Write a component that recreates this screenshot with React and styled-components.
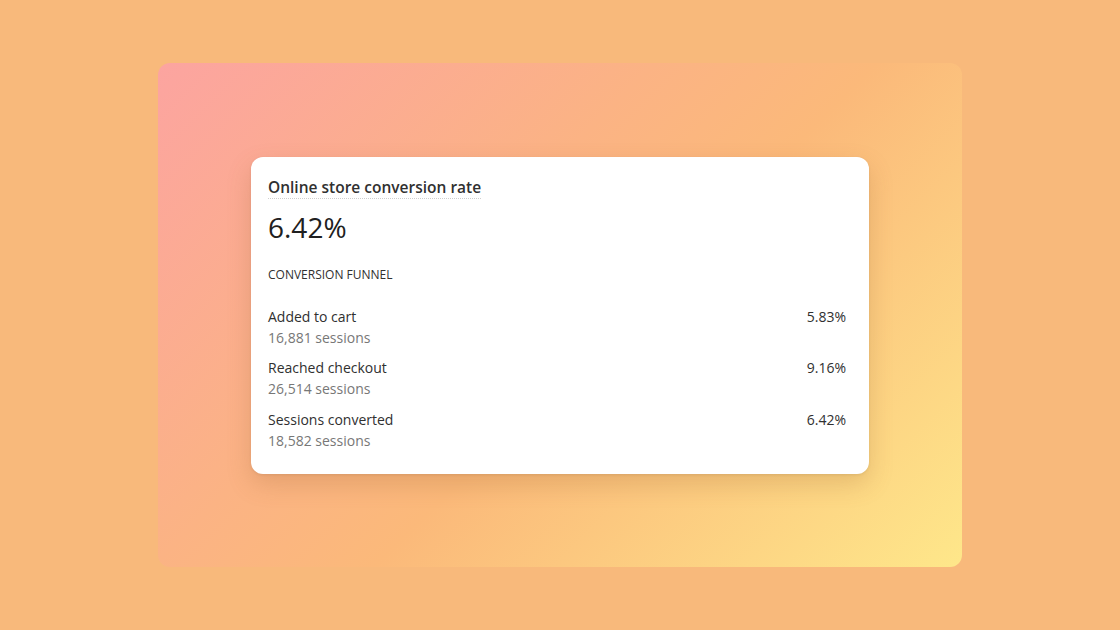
import React from 'react'
import styled, { createGlobalStyle } from 'styled-components'

const GlobalStyle = createGlobalStyle`
  html, body {
    margin: 0;
    padding: 0;
    background: #f8b97b;
  }
  body {
    font-family: "Open Sans", "Noto Sans", sans-serif;
  }
`

const Page = styled.div`
  height: 630px;
  display: flex;
  align-items: center;
  justify-content: center;
`

const Backdrop = styled.div`
  width: 804px;
  height: 504px;
  border-radius: 12px;
  background: linear-gradient(135deg, #fca4a0 0%, #fbb384 38%, #fbb97a 55%, #fee78a 100%);
  display: flex;
  align-items: center;
  justify-content: center;
`

const Card = styled.div`
  width: 618px;
  height: 317px;
  box-sizing: border-box;
  background: #fff;
  border-radius: 12px;
  padding: 19px 23px 0 17px;
  box-shadow: 0 10px 24px rgba(150, 90, 40, 0.22), 0 1px 3px rgba(0, 0, 0, 0.08);
  color: #303030;
`

const Title = styled.h2`
  display: inline-block;
  margin: 0;
  font-size: 15.5px;
  font-weight: 600;
  line-height: 20px;
  color: #303030;
  border-bottom: 1px dotted #cfcfcf;
  padding-bottom: 1px;
`

const Metric = styled.div`
  font-size: 28px;
  line-height: 36px;
  margin-top: 10px;
  color: #202020;
`

const Section = styled.div`
  font-size: 12px;
  line-height: 16px;
  margin-top: 22px;
  text-transform: uppercase;
  color: #303030;
`

const List = styled.ul`
  list-style: none;
  margin: 23px 0 0;
  padding: 0;
  display: flex;
  flex-direction: column;
  gap: 9.5px;
`

const Row = styled.li`
  display: flex;
  justify-content: space-between;
  align-items: flex-start;
`

const Label = styled.div`
  font-size: 14px;
  line-height: 21px;
  color: #303030;
`

const Sub = styled.div`
  font-size: 14px;
  line-height: 21px;
  color: #777;
`

const Rate = styled.div`
  font-size: 14px;
  line-height: 21px;
  color: #303030;
`

const funnel = [
  { name: 'Added to cart', sessions: '16,881', rate: '5.83%' },
  { name: 'Reached checkout', sessions: '26,514', rate: '9.16%' },
  { name: 'Sessions converted', sessions: '18,582', rate: '6.42%' },
]

export default function App() {
  return (
    <>
      <GlobalStyle />
      <Page>
        <Backdrop>
          <Card>
            <Title>Online store conversion rate</Title>
            <Metric>6.42%</Metric>
            <Section>Conversion funnel</Section>
            <List>
              {funnel.map(({ name, sessions, rate }) => (
                <Row key={name}>
                  <div>
                    <Label>{name}</Label>
                    <Sub>{sessions} sessions</Sub>
                  </div>
                  <Rate>{rate}</Rate>
                </Row>
              ))}
            </List>
          </Card>
        </Backdrop>
      </Page>
    </>
  )
}
